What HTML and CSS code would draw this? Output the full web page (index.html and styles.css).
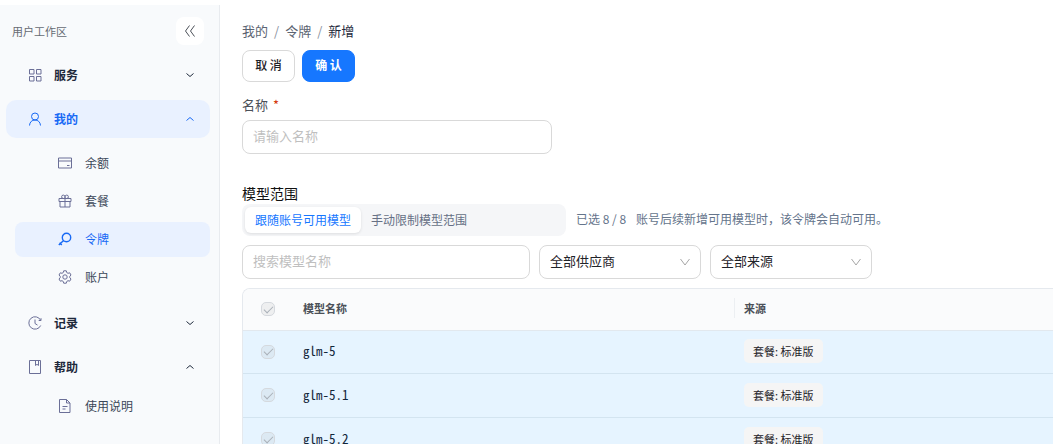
FILE: index.html
```html
<!DOCTYPE html>
<html lang="zh-CN">
<head>
<meta charset="utf-8">
<meta name="viewport" content="width=device-width, initial-scale=1">
<title>新增令牌</title>
<link rel="stylesheet" href="styles.css">
</head>
<body>
<div class="layout">
  <aside class="sidebar">
    <div class="sidebar-head">
      <span>用户工作区</span>
      <button class="collapse" type="button" aria-label="收起">
        <svg class="icon" viewBox="0 0 14 14"><path d="M6.500 1.500 2.500 7l4 5.500M11.500 1.500l-4 5.500 4 5.500"/></svg>
      </button>
    </div>
    <nav class="nav">
      <button class="group" type="button" aria-expanded="false">
        <svg class="icon" viewBox="0 0 14 14"><path d="M1.500 1.500h4.500v4.500h-4.500zM8.500 1.500h4.500v4.500h-4.500zM1.500 8.500h4.500v4.500h-4.500zM8.500 8.500h4.500v4.500h-4.500z"/></svg>
        <span>服务</span>
        <svg class="caret" viewBox="0 0 10 10"><path d="m1.500 3.500 3.500 3 3.500-3"/></svg>
      </button>
      <button class="group active" type="button" aria-expanded="true">
        <svg class="icon" viewBox="0 0 14 14"><circle cx="7" cy="4.500" r="3.500"/><path d="M1.500 13.500C1.700 10 4 8 7 8s5.300 2 5.500 5.500"/></svg>
        <span>我的</span>
        <svg class="caret" viewBox="0 0 10 10"><path d="m1.500 6.500 3.500-3 3.500 3"/></svg>
      </button>
      <div class="sub">
        <a class="item" href="#balance">
          <svg class="icon" viewBox="0 0 14 14"><path d="M.5 2h13v10H.5zM.5 5h13M9 9.500h2.500"/></svg>
          <span>余额</span>
        </a>
        <a class="item" href="#plan">
          <svg class="icon" viewBox="0 0 14 14"><path d="M1 4.500h12v3H1zM2 7.500h10v5.500H2zM7 4.500V13M7 4.500H5.200a1.700 1.700 0 1 1 1.800-1.700zM7 4.500h1.800A1.700 1.700 0 1 0 7 2.800z"/></svg>
          <span>套餐</span>
        </a>
        <a class="item active" href="#token" aria-current="page">
          <svg class="icon bold" viewBox="0 0 14 14"><circle cx="8.500" cy="5.500" r="4.200"/><path d="M5.600 8.400.8 13M1.600 10.700l2.200 2.200"/></svg>
          <span>令牌</span>
        </a>
        <a class="item" href="#account">
          <svg class="icon" viewBox="0 0 14 14"><circle cx="7" cy="7" r="2.200"/><path d="M5.700.8h2.600l.4 1.700 1.300.8 1.700-.5L13 5l-1.200 1.300v1.400L13 9l-1.300 2.200-1.700-.5-1.300.8-.4 1.700H5.700l-.4-1.700-1.300-.8-1.700.5L1 9l1.200-1.300V6.300L1 5l1.300-2.200 1.700.5 1.300-.8z"/></svg>
          <span>账户</span>
        </a>
      </div>
      <button class="group" type="button" aria-expanded="false">
        <svg class="icon" viewBox="0 0 14 14"><path d="M12.600 4.200A6.200 6.200 0 1 0 12.700 9.500M13 2.200v2.300h-2.300M7 3.500V7.500l2.500 1.600"/></svg>
        <span>记录</span>
        <svg class="caret" viewBox="0 0 10 10"><path d="m1.500 3.500 3.500 3 3.500-3"/></svg>
      </button>
      <button class="group" type="button" aria-expanded="true">
        <svg class="icon" viewBox="0 0 14 14"><path d="M1.500.5h11v13h-11zM7.500.5v5l1.500-1.200 1.500 1.200v-5"/></svg>
        <span>帮助</span>
        <svg class="caret" viewBox="0 0 10 10"><path d="m1.500 6.500 3.500-3 3.500 3"/></svg>
      </button>
      <div class="sub sub-compact">
        <a class="item" href="#guide">
          <svg class="icon" viewBox="0 0 14 14"><path d="M1.500.5h7l3.500 3.500v9.500H1.500zM8.500.5V4H12M4.500 7.500h5M4.500 10h3"/></svg>
          <span>使用说明</span>
        </a>
      </div>
    </nav>
  </aside>

  <main class="main">
    <nav class="crumbs" aria-label="路径">
      <a href="#mine">我的</a><span class="slash">/</span><a href="#token">令牌</a><span class="slash">/</span><span class="here">新增</span>
    </nav>
    <div class="actions">
      <button class="btn" type="button">取 消</button>
      <button class="btn primary" type="button">确 认</button>
    </div>

    <label class="label" for="name">名称<span class="required">*</span></label>
    <input class="field name" id="name" type="text" placeholder="请输入名称">

    <h2 class="title">模型范围</h2>
    <div class="scope">
      <div class="segments" role="radiogroup" aria-label="模型范围">
        <label class="segment"><input type="radio" name="scope" checked><span>跟随账号可用模型</span></label>
        <label class="segment"><input type="radio" name="scope"><span>手动限制模型范围</span></label>
      </div>
      <span class="hint">已选 8 / 8</span>
      <span class="hint">账号后续新增可用模型时，该令牌会自动可用。</span>
    </div>

    <div class="filters">
      <input class="field search" type="text" placeholder="搜索模型名称" aria-label="搜索模型名称">
      <div class="select">
        <select class="field" aria-label="供应商"><option>全部供应商</option></select>
        <svg class="arrow" viewBox="0 0 10 10"><path d="m.5 2 4.500 6 4.500-6"/></svg>
      </div>
      <div class="select">
        <select class="field" aria-label="来源"><option>全部来源</option></select>
        <svg class="arrow" viewBox="0 0 10 10"><path d="m.5 2 4.500 6 4.500-6"/></svg>
      </div>
    </div>

    <div class="table-box">
      <table class="table">
        <colgroup><col class="col-check"><col class="col-name"><col></colgroup>
        <thead>
          <tr>
            <th><input class="check" type="checkbox" aria-label="全选" checked disabled></th>
            <th>模型名称</th>
            <th><div class="split">来源</div></th>
          </tr>
        </thead>
        <tbody>
          <tr>
            <td><input class="check" type="checkbox" aria-label="glm-5" checked disabled></td>
            <td class="model">glm-5</td>
            <td><span class="tag">套餐: 标准版</span></td>
          </tr>
          <tr>
            <td><input class="check" type="checkbox" aria-label="glm-5.1" checked disabled></td>
            <td class="model">glm-5.1</td>
            <td><span class="tag">套餐: 标准版</span></td>
          </tr>
          <tr>
            <td><input class="check" type="checkbox" aria-label="glm-5.2" checked disabled></td>
            <td class="model">glm-5.2</td>
            <td><span class="tag">套餐: 标准版</span></td>
          </tr>
        </tbody>
      </table>
    </div>
  </main>
</div>
</body>
</html>
```
FILE: styles.css
```css
* {
  box-sizing: border-box;
}

body {
  margin: 0;
  height: 100vh;
  overflow: hidden;
  background: #fff;
  color: #1f2329;
  font: 12px/20px "Noto Sans CJK SC", sans-serif;
}

button,
input,
select {
  font: inherit;
  color: inherit;
}

a {
  color: inherit;
  text-decoration: none;
}

svg {
  fill: none;
  stroke: currentColor;
  flex: none;
}

.layout {
  display: flex;
  height: 100%;
  padding-top: 5px;
}

/* Sidebar */
.sidebar {
  flex: none;
  width: 220px;
  padding: 12px 9px 0 6px;
  background: #f8fafc;
  border-right: 1px solid #e8ebef;
}

.sidebar-head {
  display: flex;
  align-items: center;
  justify-content: space-between;
  padding: 0 6px;
  font-size: 11px;
  color: #666b73;
}

.collapse {
  display: grid;
  place-items: center;
  width: 28px;
  height: 28px;
  padding: 0;
  border: 0;
  border-radius: 8px;
  background: #fff;
  color: #4b5058;
}

.nav {
  display: flex;
  flex-direction: column;
  gap: 6px;
  margin-top: 11px;
}

.icon {
  width: 14px;
  height: 14px;
  color: #6b6f97;
}

.icon.bold {
  stroke-width: 1.4;
}

.collapse .icon,
.active .icon {
  color: inherit;
}

.group {
  display: flex;
  align-items: center;
  gap: 12px;
  height: 38px;
  padding: 0 15px 0 22px;
  border: 0;
  border-radius: 10px;
  background: transparent;
  color: #1e293b;
  font-weight: 700;
}

.caret {
  width: 10px;
  height: 10px;
  margin-left: auto;
}

.group.active,
.item.active {
  background: #e9f1ff;
  color: #1769f5;
}

.sub {
  display: flex;
  flex-direction: column;
  gap: 3px;
  padding: 2px 0 3px 9px;
}

.sub-compact {
  padding-top: 0;
  margin-top: -3px;
}

.item {
  display: flex;
  align-items: center;
  gap: 13px;
  height: 35px;
  padding: 0 0 2px 43px;
  border-radius: 8px;
  color: #3c4859;
}

/* Form */
.main {
  flex: 1;
  min-width: 0;
  padding: 16px 0 0 22px;
}

.crumbs {
  display: flex;
  gap: 6px;
  font-size: 13px;
  color: #5b6472;
}

.slash {
  color: #8b93a0;
}

.here {
  color: #1e293b;
}

.actions {
  display: flex;
  gap: 7px;
  margin-top: 9px;
}

.btn {
  min-width: 53px;
  height: 32px;
  padding: 0 12px 3px;
  border: 1px solid #d9d9d9;
  border-radius: 8px;
  background: #fff;
  font-weight: 500;
}

.btn.primary {
  border-color: #1677ff;
  background: #1677ff;
  color: #fff;
  font-weight: 700;
}

.label {
  display: flex;
  gap: 5px;
  margin-top: 13px;
  font-size: 13px;
  color: #4b5058;
}

.required {
  color: #d4380d;
}

.field {
  display: block;
  height: 34px;
  padding: 0 10px 2px;
  border: 1px solid #d9d9d9;
  border-radius: 8px;
  background: #fff;
  font-size: 13px;
}

input.field {
  padding-bottom: 4px;
}

.field::placeholder {
  color: #bfbfbf;
}

.name {
  width: 310px;
  margin-top: 5px;
}

.title {
  margin: 29px 0 1px;
  font-size: 14px;
  line-height: 20px;
  font-weight: 400;
  color: #111;
}

.scope {
  display: flex;
  align-items: center;
  gap: 10px;
}

.segments {
  display: flex;
  width: 324px;
  height: 32px;
  padding: 3px;
  border-radius: 8px;
  background: #f5f6f8;
}

.segment input {
  position: absolute;
  opacity: 0;
}

.segment span {
  display: block;
  padding: 3px 10px;
  border-radius: 6px;
  color: #667085;
}

.segment input:checked + span {
  background: #fff;
  color: #1677ff;
  box-shadow: 0 1px 3px #0000001a;
}

.hint {
  padding-bottom: 2px;
  color: #64748b;
}

.filters {
  display: flex;
  gap: 9px;
  margin-top: 9px;
}

.search {
  width: 288px;
}

.select {
  position: relative;
  width: 162px;
}

.select .field {
  width: 100%;
  appearance: none;
}

.arrow {
  position: absolute;
  top: 12px;
  right: 11px;
  width: 10px;
  height: 10px;
  color: #a6a6a6;
  pointer-events: none;
}

/* Model table */
.table-box {
  margin-top: 9px;
  overflow: hidden;
  border: 1px solid #e5e9ee;
  border-width: 1px 0 0 1px;
  border-radius: 8px 0 0 0;
}

.table {
  width: 100%;
  table-layout: fixed;
  border-collapse: separate;
  border-spacing: 0;
}

.col-check {
  width: 50px;
}

.col-name {
  width: 441px;
}

.table th {
  height: 42px;
  padding: 0 10px 3px;
  border-bottom: 1px solid #e2e8ee;
  background: #fafbfc;
  color: #4b5058;
  font-size: 11px;
  font-weight: 700;
  text-align: left;
}

.table td {
  height: 44px;
  padding: 0 10px 2px;
  border-bottom: 1px solid #d3e4f0;
  background: #e6f4ff;
}

.table tbody tr:first-child td {
  height: 43px;
}

.table th:first-child,
.table td:first-child {
  padding: 0 0 1px 18px;
}

.table th:last-child {
  padding-left: 0;
}

.split {
  padding-left: 9px;
  border-left: 1px solid #eceff2;
}

.table .model {
  color: #12263a;
  font: 13px/20px "Noto Sans Mono CJK SC", "DejaVu Sans Mono", monospace;
}

.tag {
  display: inline-block;
  padding: 2px 9px;
  border-radius: 5px;
  background: #f5f5f5;
  font-size: 11px;
}

.check {
  display: grid;
  place-items: center;
  width: 14px;
  height: 14px;
  margin: 0;
  appearance: none;
  border: 1px solid #d5d9de;
  border-radius: 5px;
  background: #8888881a;
}

.check::after {
  content: "";
  width: 8px;
  height: 4px;
  border: solid #a9b0b8;
  border-width: 0 0 1px 1px;
  transform: translateY(-1px) rotate(-45deg);
}
```
